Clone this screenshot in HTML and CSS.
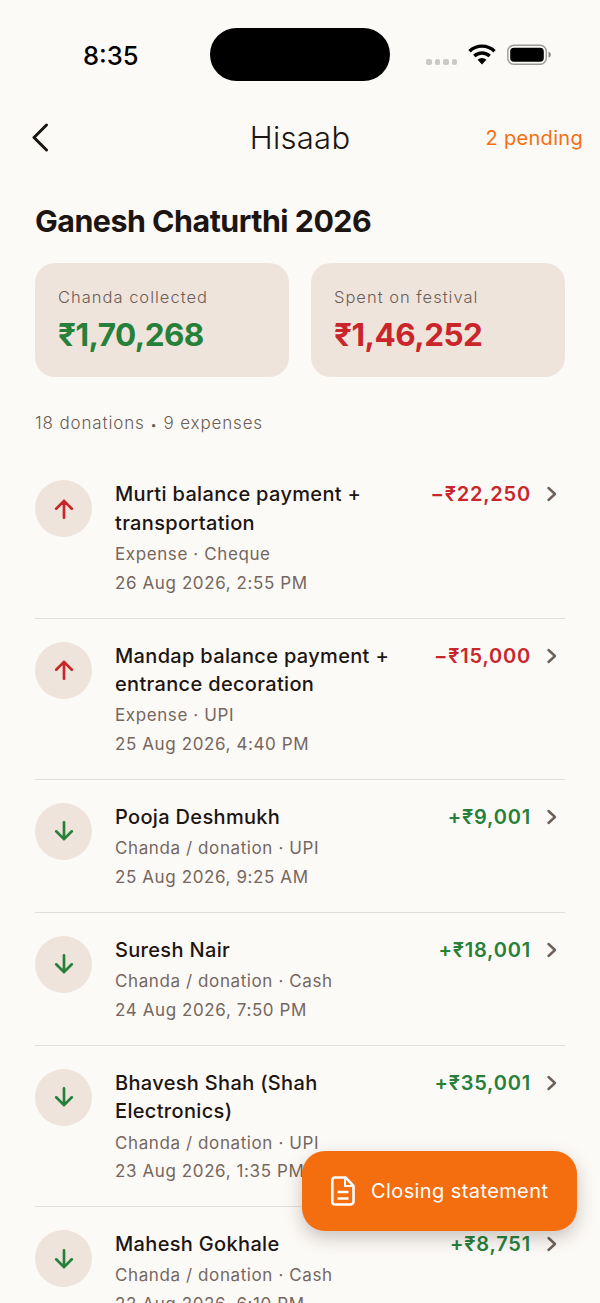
FILE: index.html
```html
<!DOCTYPE html>
<html lang="en">
<head>
<meta charset="utf-8">
<title>Hisaab</title>
<link rel="stylesheet" href="styles.css">
</head>
<body>
<div class="screen">
  <header class="status">
    <span class="time">8:35</span>
    <div class="island"></div>
    <div class="status-icons">
      <div class="dots"><i></i><i></i><i></i><i></i></div>
      <svg class="wifi" width="28" height="21" viewBox="0 0 28 21"><path d="M1.500 7.200A18 18 0 0 1 26.500 7.200" fill="none" stroke="#000" stroke-width="3.400"/><path d="M6.300 12A11.200 11.200 0 0 1 21.700 12" fill="none" stroke="#000" stroke-width="3.400"/><path d="M14 20.600 9.600 15.800a6.400 6.400 0 0 1 8.800 0Z" fill="#000"/></svg>
      <svg class="battery" width="45" height="21" viewBox="0 0 45 21"><rect x="0.800" y="1.200" width="38.400" height="19" rx="6" fill="none" stroke="#999" stroke-width="1.400"/><rect x="3.200" y="3.700" width="33.600" height="14" rx="3.800" fill="#000"/><path d="M41.500 7.800c1.800.5 2.300 1.600 2.300 2.900s-.5 2.400-2.300 2.900Z" fill="#888"/></svg>
    </div>
  </header>

  <nav class="nav">
    <svg class="back" width="18" height="29" viewBox="0 0 18 29"><path d="M15.500 2 3 14.500 15.500 27" fill="none" stroke="#1c1512" stroke-width="3" stroke-linecap="round" stroke-linejoin="round"/></svg>
    <h1 class="nav-title">Hisaab</h1>
    <span class="pending">2 pending</span>
  </nav>

  <main class="content">
    <h2 class="event">Ganesh Chaturthi 2026</h2>
    <section class="cards">
      <div class="card">
        <div class="card-label">Chanda collected</div>
        <div class="card-value in">₹1,70,268</div>
      </div>
      <div class="card">
        <div class="card-label">Spent on festival</div>
        <div class="card-value out">₹1,46,252</div>
      </div>
    </section>
    <p class="meta">18 donations <span class="sep">•</span> 9 expenses</p>

    <ul class="list">
      <li class="row">
        <div class="badge"><svg class="arrow out-s" viewBox="0 0 24 24"><path d="M12 20V4.500M4.800 11.700 12 4.500l7.200 7.200"/></svg></div>
        <div class="body">
          <div class="name">Murti balance payment + transportation</div>
          <div class="sub first">Expense · Cheque</div>
          <div class="sub">26 Aug 2026, 2:55 PM</div>
        </div>
        <div class="amount out">−₹22,250</div>
        <svg class="chev" viewBox="0 0 12 16"><path d="M2.500 2 9 8l-6.500 6"/></svg>
      </li>
      <li class="row">
        <div class="badge"><svg class="arrow out-s" viewBox="0 0 24 24"><path d="M12 20V4.500M4.800 11.700 12 4.500l7.200 7.200"/></svg></div>
        <div class="body">
          <div class="name">Mandap balance payment + entrance decoration</div>
          <div class="sub first">Expense · UPI</div>
          <div class="sub">25 Aug 2026, 4:40 PM</div>
        </div>
        <div class="amount out">−₹15,000</div>
        <svg class="chev" viewBox="0 0 12 16"><path d="M2.500 2 9 8l-6.500 6"/></svg>
      </li>
      <li class="row">
        <div class="badge"><svg class="arrow in-s" viewBox="0 0 24 24"><path d="M12 4v15.500M4.800 12.300 12 19.500l7.200-7.200"/></svg></div>
        <div class="body">
          <div class="name">Pooja Deshmukh</div>
          <div class="sub first">Chanda / donation · UPI</div>
          <div class="sub">25 Aug 2026, 9:25 AM</div>
        </div>
        <div class="amount in">+₹9,001</div>
        <svg class="chev" viewBox="0 0 12 16"><path d="M2.500 2 9 8l-6.500 6"/></svg>
      </li>
      <li class="row">
        <div class="badge"><svg class="arrow in-s" viewBox="0 0 24 24"><path d="M12 4v15.500M4.800 12.300 12 19.500l7.200-7.200"/></svg></div>
        <div class="body">
          <div class="name">Suresh Nair</div>
          <div class="sub first">Chanda / donation · Cash</div>
          <div class="sub">24 Aug 2026, 7:50 PM</div>
        </div>
        <div class="amount in">+₹18,001</div>
        <svg class="chev" viewBox="0 0 12 16"><path d="M2.500 2 9 8l-6.500 6"/></svg>
      </li>
      <li class="row">
        <div class="badge"><svg class="arrow in-s" viewBox="0 0 24 24"><path d="M12 4v15.500M4.800 12.300 12 19.500l7.200-7.200"/></svg></div>
        <div class="body">
          <div class="name">Bhavesh Shah (Shah Electronics)</div>
          <div class="sub first">Chanda / donation · UPI</div>
          <div class="sub">23 Aug 2026, 1:35 PM</div>
        </div>
        <div class="amount in">+₹35,001</div>
        <svg class="chev" viewBox="0 0 12 16"><path d="M2.500 2 9 8l-6.500 6"/></svg>
      </li>
      <li class="row">
        <div class="badge"><svg class="arrow in-s" viewBox="0 0 24 24"><path d="M12 4v15.500M4.800 12.300 12 19.500l7.200-7.200"/></svg></div>
        <div class="body">
          <div class="name">Mahesh Gokhale</div>
          <div class="sub first">Chanda / donation · Cash</div>
          <div class="sub">22 Aug 2026, 6:10 PM</div>
        </div>
        <div class="amount in">+₹8,751</div>
        <svg class="chev" viewBox="0 0 12 16"><path d="M2.500 2 9 8l-6.500 6"/></svg>
      </li>
    </ul>
  </main>

  <button class="fab">
    <svg class="doc" width="24" height="30" viewBox="0 0 24 30"><path d="M3.800 1.500H14.500L22.500 9.800V25.500a3 3 0 0 1-3 3H3.800a2.500 2.500 0 0 1-2.500-2.500V4A2.500 2.500 0 0 1 3.800 1.500Z" fill="none" stroke="#fff" stroke-width="2.600" stroke-linejoin="round"/><path d="M14 2.500v7.500h8" fill="none" stroke="#fff" stroke-width="2"/><path d="M6.500 16h11M6.500 22.500h11" stroke="#fff" stroke-width="2.600"/></svg>
    <span>Closing statement</span>
  </button>
</div>
</body>
</html>
```
FILE: styles.css
```css
* { box-sizing: border-box; }
html, body { margin: 0; padding: 0; height: 100%; }
body { background: #fcfaf7; font-family: Inter, "Noto Sans", sans-serif; color: #1c1512; overflow: hidden; }
.screen { position: relative; width: 600px; height: 1303px; overflow: hidden; }

.status { position: relative; height: 110px; }
.time { position: absolute; left: 83px; top: 39px; font-size: 25.500px; line-height: 34px; font-weight: 500; color: #000; }
.island { position: absolute; left: 210px; top: 28px; width: 180px; height: 53px; border-radius: 27px; background: #000; }
.status-icons { position: absolute; left: 426px; top: 44px; display: flex; align-items: flex-start; }
.dots { display: flex; gap: 3px; margin-top: 15px; margin-right: 11px; }
.dots i { width: 5.600px; height: 5.600px; border-radius: 2px; background: #c9c9c9; }
.wifi { margin-right: 11px; }

.nav { display: flex; align-items: center; justify-content: space-between; height: 55px; padding: 0 17px 0 31px; position: relative; }
.nav-title { position: absolute; left: 0; right: 0; margin: 0; text-align: center; font-size: 31px; font-weight: 300; line-height: 55px; letter-spacing: 0.300px; pointer-events: none; }
.pending { font-size: 20px; font-weight: 400; color: #f56e0f; letter-spacing: 0.300px; }

.content { padding: 0 35px; }
.event { margin: 35px 0 0; font-size: 30.400px; line-height: 42px; font-weight: 700; letter-spacing: -0.500px; }
.cards { display: flex; gap: 22px; margin-top: 21px; }
.card { flex: 1; height: 114px; border-radius: 20px; background: #efe4dc; padding: 23px 23px 0; }
.card-label { font-size: 16.500px; line-height: 22px; font-weight: 300; color: #6b5d55; letter-spacing: 1px; }
.card-value { font-size: 31.500px; line-height: 42px; font-weight: 700; margin-top: 6px; letter-spacing: -0.550px; }
.in { color: #26803a; }
.out { color: #c9262c; }
.meta { margin: 35px 0 0; font-size: 17px; line-height: 22px; font-weight: 300; color: #6b5d55; letter-spacing: 0.850px; }
.sep { font-size: 12px; line-height: 0; }

.list { list-style: none; margin: 23.300px 0 0; padding: 0; }
.row { display: flex; align-items: flex-start; padding: 23px 0 20.500px; border-bottom: 1px solid #e3dedb; }
.badge { flex: none; width: 57px; height: 57px; border-radius: 50%; background: #efe4dc; display: flex; align-items: center; justify-content: center; }
.arrow { width: 26px; height: 26px; fill: none; stroke-width: 2.500; stroke-linecap: round; stroke-linejoin: round; }
.out-s { stroke: #c9262c; }
.in-s { stroke: #26803a; }
.body { flex: 1; min-width: 0; margin-left: 23px; padding-right: 16px; }
.name { font-size: 20px; line-height: 28.500px; font-weight: 500; letter-spacing: 0.330px; }
.sub { font-size: 17px; line-height: 28.500px; color: #75675f; letter-spacing: 0.600px; white-space: nowrap; }
.sub.first { margin-top: 2.850px; }
.amount { flex: none; font-size: 20px; line-height: 28.500px; font-weight: 600; letter-spacing: 0.800px; }
.chev { flex: none; width: 12px; height: 16px; margin: 6px 7px 0 15px; fill: none; stroke: #6b5f58; stroke-width: 2.400; stroke-linecap: round; stroke-linejoin: round; }

.fab { position: absolute; left: 302px; top: 1151px; width: 275px; height: 80px; border: 0; border-radius: 23px; background: #f46d0e; color: #fff; display: flex; align-items: center; gap: 16px; padding: 0 0 0 29px; font-family: inherit; font-size: 20px; font-weight: 400; letter-spacing: 0.400px; box-shadow: 0 7px 18px rgba(60, 40, 25, 0.26); }
```
